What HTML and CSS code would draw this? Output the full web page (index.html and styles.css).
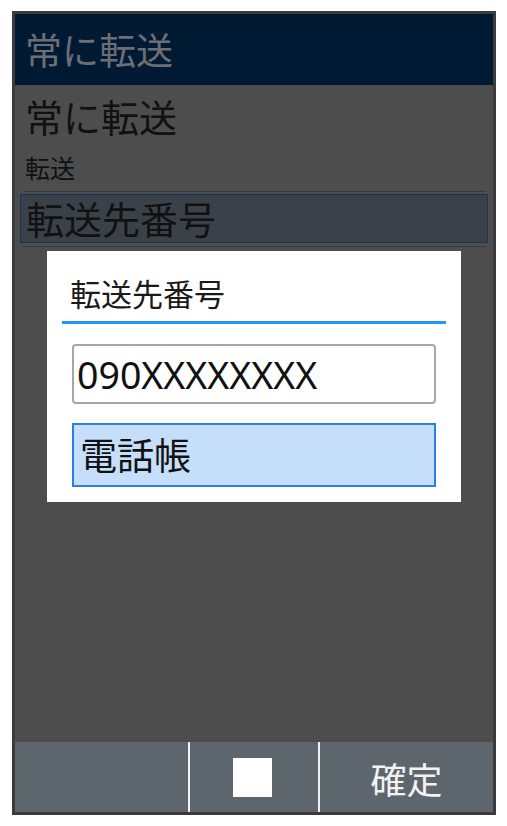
FILE: index.html
```html
<!DOCTYPE html>
<html lang="ja">
<head>
    <meta charset="UTF-8">
    <meta name="viewport" content="width=device-width, initial-scale=1.0">
    <title>常に転送</title>
    <link rel="stylesheet" href="styles.css">
</head>
<body>
    <div class="phone">
        <div class="header">常に転送</div>
        <div class="content">
            <div class="item-title">常に転送</div>
            <div class="item-sub">転送</div>
            <div class="divider"></div>
            <div class="row-selected">転送先番号</div>
            <div class="divider"></div>

            <!-- number entry dialog -->
            <div class="dialog">
                <div class="dialog-title">転送先番号</div>
                <div class="dialog-body">
                    <div class="number-input">090XXXXXXXX</div>
                    <div class="phonebook-btn">電話帳</div>
                </div>
            </div>
        </div>
        <div class="softkeys">
            <div class="softkey left"></div>
            <div class="softkey center"><span class="square"></span></div>
            <div class="softkey right">確定</div>
        </div>
    </div>
</body>
</html>
```

FILE: styles.css
```css
body {
    margin: 0;
    padding: 11px 11px 0 12px;
    background-color: white;
    font-family: "Noto Sans CJK JP", "Noto Sans", sans-serif;
}

.phone {
    width: 478px;
    height: 798px;
    border: 3px solid #3b3b3b;
    display: flex;
    flex-direction: column;
    background-color: #4d4d4d;
}

.header {
    height: 71px;
    background-color: #001a33;
    color: #6b6e73;
    font-size: 37px;
    line-height: 71px;
    padding-left: 10px;
}

.content {
    flex: 1;
    position: relative;
    padding: 7px 7px 0 8px;
}

.item-title {
    font-size: 38px;
    line-height: 48px;
    padding-left: 2px;
    color: #111;
}

.item-sub {
    font-size: 25px;
    line-height: 30px;
    padding-left: 2px;
    color: #111;
    margin: 12px 0 9px 0;
}

.divider {
    height: 1px;
    background-color: #3a3a3a;
}

.row-selected {
    margin: 2px -2px 3px -3px;
    height: 49px;
    box-sizing: border-box;
    border: 1px solid #15355a;
    background-color: #3b4149;
    font-size: 38px;
    line-height: 46px;
    padding-left: 5px;
    color: #111;
}

.dialog {
    position: absolute;
    left: 32px;
    top: 166px;
    width: 414px;
    height: 251px;
    background-color: white;
}

.dialog-title {
    margin: 0 15px 0 15px;
    height: 73px;
    border-bottom: 3px solid #2196f3;
    font-size: 31px;
    line-height: 84px;
    padding-left: 8px;
    color: #1a1a1a;
    box-sizing: border-box;
}

.dialog-body {
    padding: 20px 25px 0 25px;
}

.number-input {
    height: 60px;
    border: 2px solid #a6a6a6;
    border-radius: 4px;
    box-sizing: border-box;
    font-family: "Noto Sans", sans-serif;
    font-size: 37.5px;
    line-height: 58px;
    padding-left: 3px;
    color: #111;
}

.phonebook-btn {
    margin-top: 19px;
    height: 64px;
    border: 2px solid #2b7fe0;
    background-color: #c5dffa;
    box-sizing: border-box;
    font-size: 37px;
    line-height: 58px;
    padding-left: 6px;
    color: #111;
}

.softkeys {
    height: 70px;
    display: flex;
    background-color: #5e666d;
}

.softkey {
    display: flex;
    align-items: center;
    justify-content: center;
    color: #f2f2f2;
    font-size: 36px;
}

.softkey.left {
    width: 173px;
    border-right: 2px solid #f0f0f0;
}

.softkey.center {
    width: 128px;
    border-right: 2px solid #f0f0f0;
}

.softkey.right {
    flex: 1;
    padding-top: 2px;
}

.square {
    width: 39px;
    height: 39px;
    background-color: white;
    margin-left: -4px;
}
```
